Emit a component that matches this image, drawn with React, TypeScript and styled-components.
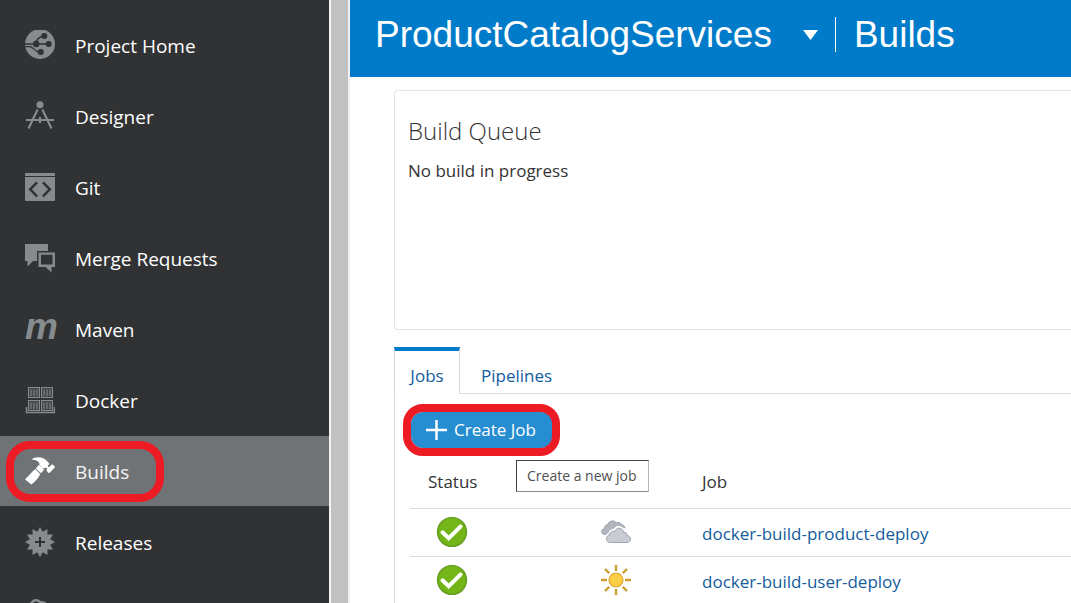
import React from "react";
import styled, { createGlobalStyle, css } from "styled-components";

const GlobalStyle = createGlobalStyle`
  *, *::before, *::after { box-sizing: border-box; }
  body {
    margin: 0;
    background: #ffffff;
    color: #333333;
    font-family: "Open Sans", "Noto Sans", sans-serif;
    font-size: 17px;
    line-height: 24px;
  }
`;

const Shell = styled.div`
  display: flex;
  height: 100vh;
  overflow: hidden;
`;

const Sidebar = styled.nav`
  flex: 0 0 329px;
  overflow: hidden;
  background: #313234;
  padding-top: 10px;
`;

const NavList = styled.ul`
  list-style: none;
  margin: 0;
  padding: 0;
  display: flex;
  flex-direction: column;
  gap: 1px;
`;

const NavItem = styled.li`
  position: relative;
`;

const NavLink = styled.a<{ $active?: boolean }>`
  display: flex;
  align-items: center;
  gap: 20px;
  height: 70px;
  padding-left: 25px;
  color: ${(p) => (p.$active ? "#f4f4f4" : "#ffffff")};
  background: ${(p) => (p.$active ? "#6f7375" : "transparent")};
  font-size: 19px;
  text-decoration: none;

  svg {
    display: block;
    flex: none;
    width: 30px;
    height: 30px;
    color: ${(p) => (p.$active ? "#ffffff" : "#868b8f")};
  }
`;

const NavText = styled.span`
  padding-top: 1px;
`;

const ScrollTrack = styled.div`
  flex: 0 0 21px;
  background: #c1c1c1;
  border: solid #f1f1f1;
  border-width: 0 2px;
`;

const Main = styled.main`
  flex: 1;
  min-width: 0;
  overflow: hidden;
`;

const Header = styled.header`
  display: flex;
  align-items: center;
  height: 77px;
  padding: 0 25px 8px;
  background: #007bc9;
  color: #ffffff;
  font-family: "Liberation Sans", Arial, sans-serif;
`;

const ProjectButton = styled.button`
  display: flex;
  align-items: center;
  gap: 31px;
  padding: 0 17px 0 0;
  border: 0;
  background: none;
  color: inherit;
  font: inherit;
  font-size: 37px;
  line-height: 40px;
`;

const PageTitle = styled.h1`
  margin: 0;
  padding-left: 18px;
  border-left: 1px solid #ffffff;
  font-size: 37px;
  font-weight: 400;
  line-height: 35px;
`;

const Content = styled.div`
  padding: 13px 0 0 44px;
`;

const QueueCard = styled.section`
  min-height: 240px;
  padding: 24px 13px;
  border: 1px solid #e4e4e4;
  border-right: 0;
  border-radius: 4px 0 0 4px;
`;

const QueueTitle = styled.h2`
  margin: 0 0 12px;
  font-size: 24px;
  font-weight: 300;
  line-height: 32px;
`;

const QueueText = styled.p`
  margin: 0;
`;

const TabBar = styled.div`
  display: flex;
  margin-top: 17px;
`;

const Tab = styled.button<{ $active?: boolean }>`
  height: 47px;
  padding: 11px 21px 0;
  border: 0;
  border-bottom: 1px solid #dddddd;
  background: #ffffff;
  color: #145c9e;
  font: inherit;

  ${(p) =>
    p.$active &&
    css`
      width: 66px;
      padding: 6px 0 0;
      border: 1px solid #d6d6d6;
      border-top: 4px solid #007bc9;
      border-bottom: 0;
    `}
`;

const TabFill = styled.div`
  flex: 1;
  border-bottom: 1px solid #dddddd;
`;

const TabPanel = styled.div`
  padding: 18px 0 0 15px;
  border-left: 1px solid #dddddd;
`;

const CreateWrap = styled.div`
  position: relative;
  width: 143px;
  padding-left: 1px;
`;

const CreateButton = styled.button`
  display: flex;
  align-items: center;
  gap: 7px;
  width: 142px;
  height: 36px;
  padding: 0 0 0 15px;
  border: 0;
  border-radius: 12px;
  background: #268ed0;
  color: #ffffff;
  font: inherit;
  white-space: nowrap;

  svg {
    flex: none;
  }
`;

const Callout = styled.span<{ $kind: "nav" | "button" }>`
  position: absolute;
  pointer-events: none;
  border: 8px solid #ed1c24;
  ${(p) =>
    p.$kind === "nav"
      ? css`
          top: 5px;
          left: 6px;
          width: 158px;
          height: 61px;
          border-radius: 24px;
        `
      : css`
          inset: -8px -7px;
          border-radius: 20px;
        `}
`;

const Tooltip = styled.span`
  position: absolute;
  top: 48px;
  left: 106px;
  padding: 0 11px 0 10px;
  border: 1px solid #414141;
  border-right-color: #b5b5b5;
  border-bottom-color: #8c8c8c;
  background: #ffffff;
  color: #505050;
  font-size: 14px;
  line-height: 30px;
  white-space: nowrap;
`;

const JobTable = styled.table`
  width: 100%;
  table-layout: fixed;
  border-collapse: collapse;
`;

const HeadCell = styled.th<{ $width?: number; $indent: number }>`
  width: ${(p) => (p.$width ? `${p.$width}px` : "auto")};
  height: 60px;
  padding: 9px 0 0 ${(p) => p.$indent}px;
  border-bottom: 1px solid #dddddd;
  color: #333333;
  font-weight: 400;
  text-align: left;
`;

const Cell = styled.td<{ $indent?: number; $center?: boolean }>`
  height: 48px;
  padding: 0 0 0 ${(p) => p.$indent ?? 0}px;
  border-bottom: 1px solid #dddddd;
  text-align: ${(p) => (p.$center ? "center" : "left")};

  svg {
    display: inline-block;
    vertical-align: middle;
  }
`;

const JobLink = styled.a`
  display: block;
  padding-top: 3px;
  color: #145c9e;
  text-decoration: none;
`;

const ProjectIcon = () => (
  <svg viewBox="0 0 30 30" aria-hidden="true">
    <circle cx="15" cy="14" r="15" fill="currentColor" />
    <g stroke="#313234" fill="none" strokeWidth="1.4">
      <path d="M0 14h24M10.500 13.500c1-4 3.500-6.500 8-7.500M0 16.600h5c3.500.2 3.500 5 10.500 5.700" />
    </g>
    <g fill="#313234">
      <circle cx="19.300" cy="5.900" r="3" />
      <circle cx="11.200" cy="14" r="3.200" />
      <circle cx="23.700" cy="14" r="3" />
      <circle cx="15.700" cy="22" r="3.100" />
    </g>
  </svg>
);

const DesignerIcon = () => (
  <svg viewBox="0 0 30 30" aria-hidden="true">
    <circle cx="15" cy="3.700" r="3.500" fill="currentColor" />
    <g stroke="currentColor" fill="none" strokeWidth="2.200">
      <path d="M12.600 8.500 3.500 27.500M17.400 8.500 26.500 27.500" />
      <path d="M1 19h28" strokeWidth="2" />
      <path d="M15 16v6" />
    </g>
  </svg>
);

const GitIcon = () => (
  <svg viewBox="0 0 30 30" aria-hidden="true">
    <path d="M1 1h28a1 1 0 0 1 1 1v2H0V2a1 1 0 0 1 1-1zM0 5h30v23a1 1 0 0 1-1 1H1a1 1 0 0 1-1-1z" fill="currentColor" />
    <path d="m12 10.300-6.800 7 6.800 7M18 10.300l6.800 7-6.800 7" stroke="#313234" strokeWidth="2.500" fill="none" />
  </svg>
);

const MergeIcon = () => (
  <svg viewBox="0 0 30 30" aria-hidden="true">
    <path d="M0 1h23v7H12v10H8l-5.500 5.500V18H0z" fill="currentColor" />
    <path d="M13.500 9.500H30V24h-3.500v5.500L20.500 24h-7zm2.500 2.300v9.700h11.500v-9.700z" fill="currentColor" fillRule="evenodd" />
  </svg>
);

const MavenMark = styled.span`
  display: block;
  flex: none;
  width: 30px;
  height: 40px;
  color: #868b8f;
  font: italic 700 37px/36px "Liberation Sans", Arial, sans-serif;
`;

const MavenIcon = () => <MavenMark aria-hidden="true">m</MavenMark>;

const DockerIcon = () => (
  <svg viewBox="0 0 30 30" aria-hidden="true">
    <g stroke="currentColor" fill="none" strokeWidth="1">
      {[3.5, 16.5].map((x) =>
        [2.5, 15.5].map((y) => (
          <g key={`${x}-${y}`}>
            <rect x={x} y={y} width="11" height="10" fill="#44474a" />
            <path d={`M${x + 2.5} ${y + 2}v6.500M${x + 5.5} ${y + 2}v6.500M${x + 8.5} ${y + 2}v6.500`} />
          </g>
        ))
      )}
      <path d="M1.500 22v5.500h28V22" strokeWidth="1.500" />
    </g>
  </svg>
);

const HammerIcon = () => (
  <svg viewBox="0 0 30 30" aria-hidden="true" fill="currentColor">
    <path d="M6.500 3.600C10 .4 17.500.2 21.300 4.200l3 3.200c-.8 2.600-3.400 4.600-6.300 5L14.400 8.800C15 6 11.500 4 6.500 3.600z" />
    <path d="m14 8.800 5 5-3 3.400-5.200-4.800z" />
    <path d="m10.200 13 5 4.900c-1.800 4.600-5.400 7.800-9 10.600L0 23.200c3.800-3 6.200-7 10.200-10.200z" />
    <path d="m21.600 13.800 5-5.200 1-.2 2.400 2.400-.4 1-5 5-1 .2-2-2.200z" />
    <path d="m21 8.500 3.500 3.500-1.500 1.500-3.500-3.500z" />
  </svg>
);

const starPoints = Array.from({ length: 24 }, (_, i) => {
  const r = i % 2 === 0 ? 15 : 10.5;
  const a = (i * Math.PI) / 12;
  return `${(15 + r * Math.sin(a)).toFixed(2)},${(15 - r * Math.cos(a)).toFixed(2)}`;
}).join(" ");

const ReleaseIcon = () => (
  <svg viewBox="0 0 30 30" aria-hidden="true">
    <polygon points={starPoints} fill="currentColor" />
    <path d="M15 10v10M10 15h10" stroke="#313234" strokeWidth="2" />
  </svg>
);

const GaugeIcon = () => (
  <svg viewBox="0 0 30 30" aria-hidden="true">
    <path d="M6 6c2-4.500 7-5 9.500-1.500 2-.5 4 0 5.500 1.500v12H6z" stroke="currentColor" strokeWidth="2.500" fill="none" />
  </svg>
);

const SuccessIcon = () => (
  <svg width="32" height="32" viewBox="0 0 32 32" role="img" aria-label="Success">
    <circle cx="16" cy="16" r="14.500" fill="#74b51a" stroke="#5c9715" strokeWidth="1.200" />
    <path d="m6.500 16.300 6.200 6L24.500 10.500" stroke="#ffffff" strokeWidth="4" fill="none" strokeLinecap="round" />
  </svg>
);

const CloudyIcon = () => (
  <svg width="32" height="32" viewBox="0 0 32 32" role="img" aria-label="Cloudy">
    <path d="M4.500 18.500C1 18 .5 13.500 4.500 12.500c0-3.500 2.500-4 3.500-4C9 4 15 4 16.500 7c2-1.200 4-.5 4.500 1.500 2 0 3.500 1.500 4 3L7 19z" fill="#b2b6bf" stroke="#999ea8" />
    <path d="M10.500 26.500c-6 0-5.500-8-.8-8 0-3.500 3-4.500 5-4 2-4.500 8.300-3.500 9 1.500 2-.2 3.300 1 3.300 3 5 1 4.500 7.500 0 7.500z" fill="#ffffff" stroke="#ffffff" strokeWidth="3" />
    <path d="M10.500 26.500c-5.500 0-5-7.500-.8-7.500 0-3.500 3-4.500 5-3.500 2-5 8.300-3.800 9 1 2-.5 3.300.8 3.300 3 5 .5 4.500 7 0 7z" fill="#c9ccd5" stroke="#a1a6b0" />
  </svg>
);

const SunnyIcon = () => (
  <svg width="32" height="32" viewBox="0 0 32 32" role="img" aria-label="Sunny">
    <g stroke="#cc9f30" strokeWidth="2.400">
      <path d="M16 1v6M16 25v6M1 16h6M25 16h6M5 5l4.200 4.200M22.800 22.800 27 27M27 5l-4.200 4.200M9.200 22.800 5 27" />
    </g>
    <circle cx="16" cy="16" r="7" fill="#fccd46" stroke="#dba832" strokeWidth="1.200" />
  </svg>
);

const navItems = [
  { label: "Project Home", Icon: ProjectIcon },
  { label: "Designer", Icon: DesignerIcon },
  { label: "Git", Icon: GitIcon },
  { label: "Merge Requests", Icon: MergeIcon },
  { label: "Maven", Icon: MavenIcon },
  { label: "Docker", Icon: DockerIcon },
  { label: "Builds", Icon: HammerIcon, active: true },
  { label: "Releases", Icon: ReleaseIcon },
  { label: "", Icon: GaugeIcon },
];

const jobs = [
  { name: "docker-build-product-deploy", Weather: CloudyIcon },
  { name: "docker-build-user-deploy", Weather: SunnyIcon },
];

export default function App() {
  return (
    <>
      <GlobalStyle />
      <Shell>
        <Sidebar>
          <NavList>
            {navItems.map(({ label, Icon, active }, i) => (
              <NavItem key={i}>
                <NavLink href="#" $active={active} aria-current={active ? "page" : undefined}>
                  <Icon />
                  <NavText>{label}</NavText>
                </NavLink>
                {active && <Callout $kind="nav" />}
              </NavItem>
            ))}
          </NavList>
        </Sidebar>
        <ScrollTrack />
        <Main>
          <Header>
            <ProjectButton>
              ProductCatalogServices
              <svg width="15" height="10" viewBox="0 0 15 10" aria-hidden="true">
                <path d="M0 0h15L7.500 10z" fill="#ffffff" />
              </svg>
            </ProjectButton>
            <PageTitle>Builds</PageTitle>
          </Header>
          <Content>
            <QueueCard>
              <QueueTitle>Build Queue</QueueTitle>
              <QueueText>No build in progress</QueueText>
            </QueueCard>
            <TabBar role="tablist">
              <Tab role="tab" aria-selected="true" $active>Jobs</Tab>
              <Tab role="tab" aria-selected="false">Pipelines</Tab>
              <TabFill />
            </TabBar>
            <TabPanel role="tabpanel">
              <CreateWrap>
                <CreateButton>
                  <svg width="21" height="20" viewBox="0 0 21 20" aria-hidden="true">
                    <path d="M10.500 0v20M0 10h21" stroke="#ffffff" strokeWidth="2.400" />
                  </svg>
                  Create Job
                </CreateButton>
                <Callout $kind="button" />
                <Tooltip role="tooltip">Create a new job</Tooltip>
              </CreateWrap>
              <JobTable>
                <thead>
                  <tr>
                    <HeadCell $width={128} $indent={18}>Status</HeadCell>
                    <HeadCell $width={156} $indent={0} />
                    <HeadCell $indent={8}>Job</HeadCell>
                  </tr>
                </thead>
                <tbody>
                  {jobs.map(({ name, Weather }) => (
                    <tr key={name}>
                      <Cell $indent={26}><SuccessIcon /></Cell>
                      <Cell $center><Weather /></Cell>
                      <Cell $indent={8}><JobLink href="#">{name}</JobLink></Cell>
                    </tr>
                  ))}
                </tbody>
              </JobTable>
            </TabPanel>
          </Content>
        </Main>
      </Shell>
    </>
  );
}
